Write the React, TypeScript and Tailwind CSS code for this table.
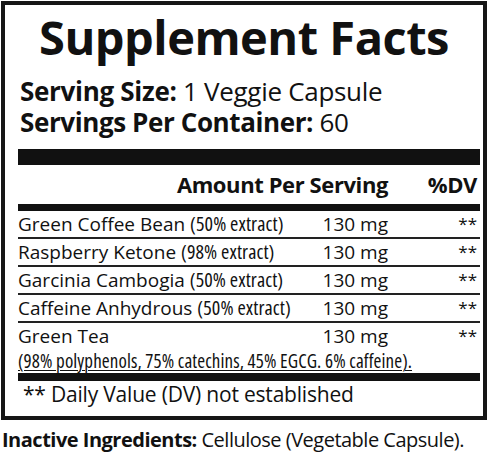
import React from "react";

const rows = [
  { name: "Green Coffee Bean", note: "(50% extract)" },
  { name: "Raspberry Ketone", note: "(98% extract)" },
  { name: "Garcinia Cambogia", note: "(50% extract)" },
  { name: "Caffeine Anhydrous", note: "(50% extract)" },
];

export default function App() {
  return (
    <div
      className="w-[489px] h-[458px] bg-white text-[#111] overflow-hidden"
      style={{ fontFamily: '"Open Sans", "Noto Sans", sans-serif' }}
    >
      <div className="ml-[1px] mt-[1px] w-[486px] h-[419px] border-[4px] border-[#161616] pl-[13px] pr-[3px] flex flex-col">
        <div className="-ml-[13px] -mr-[3px] h-[64px] leading-[64px] text-[47px] font-bold text-center tracking-[-0.5px]">
          Supplement Facts
        </div>
        <div className="mt-[7px] pl-[2px] h-[31px] leading-[31px] text-[26px] tracking-[-0.3px] whitespace-nowrap">
          <span className="font-bold">Serving Size:</span> 1 Veggie Capsule
        </div>
        <div className="pl-[2px] h-[31px] leading-[31px] text-[26px] tracking-[-0.4px] whitespace-nowrap">
          <span className="font-bold">Servings Per Container:</span> 60
        </div>
        <div className="mt-[11px] h-[16px] bg-[#111]" />
        <div className="h-[39px] leading-[39px] flex text-[22px] font-bold tracking-[-0.4px]">
          <div className="flex-1 text-right">Amount Per Serving</div>
          <div className="w-[92px] pr-[3px] text-right">%DV</div>
        </div>
        <div className="h-[7px] bg-[#111]" />
        {rows.map((r) => (
          <div
            key={r.name}
            className="h-[28px] border-b-2 border-[#222] flex text-[19px] leading-[26px] whitespace-nowrap"
          >
            <div className="flex-1">
              {r.name}{" "}
              <span className="text-[20px] font-stretch-[75%] tracking-[0.1px]">{r.note}</span>
            </div>
            <div className="w-[70px] text-right">130 mg</div>
            <div className="w-[92px] pr-[3px] text-right text-[17px]">**</div>
          </div>
        ))}
        <div className="h-[26px] flex text-[19px] leading-[26px] whitespace-nowrap">
          <div className="flex-1">Green Tea</div>
          <div className="w-[70px] text-right">130 mg</div>
          <div className="w-[92px] pr-[3px] text-right text-[17px]">**</div>
        </div>
        <div className="h-[24px] leading-[24px] text-[19px] font-stretch-[75%] tracking-[0.1px] whitespace-nowrap">
          <span className="underline decoration-1 underline-offset-[2px]">
            (98% polyphenols, 75% catechins, 45% EGCG. 6% caffeine).
          </span>
        </div>
        <div className="h-[8px] bg-[#111]" />
        <div className="h-[27px] leading-[27px] pl-[5px] text-[21px] tracking-[-0.2px] whitespace-nowrap">
          ** Daily Value (DV) not established
        </div>
      </div>
      <div className="pl-[2px] h-[38px] leading-[40px] text-[20px] tracking-[-0.5px] whitespace-nowrap">
        <span className="font-bold">Inactive Ingredients:</span> Cellulose (Vegetable Capsule).
      </div>
    </div>
  );
}
